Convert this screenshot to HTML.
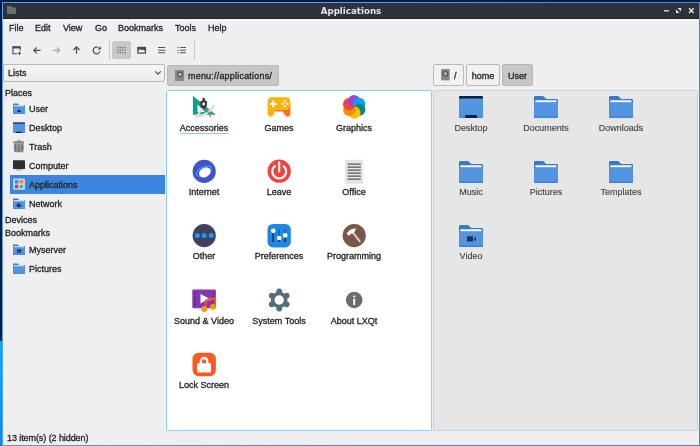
<!DOCTYPE html>
<html><head><meta charset="utf-8"><title>Applications</title>
<style>
*{box-sizing:border-box;margin:0;padding:0}
html,body{width:700px;height:446px;overflow:hidden}
body{position:relative;background:#011d42;font-family:"Liberation Sans",sans-serif;font-size:9px;color:#232323}
.abs,.t,.c,svg{position:absolute}
.t,.c{will-change:transform;-webkit-text-stroke:.3px #222}
.t{line-height:12px;white-space:nowrap}
.c{line-height:12px;white-space:nowrap;text-align:center;width:76px}
#win{left:2px;top:2.2px;width:698px;height:443.8px;background:linear-gradient(135deg,#5a9ff3 30%,#3e86de 70%)}
#inner{left:3px;top:3.3px;width:695.8px;height:441.8px;background:#efefef}
#title{left:3px;top:3.3px;width:695.8px;height:16.1px;background:#2e323d;border-bottom:1px solid #22252e}
#tl{left:3px;top:19.5px;width:695.8px;height:1.3px;background:#fcfcfc}
.r{color:#454545;-webkit-text-stroke:.15px #454545}
.btn{border:1px solid #b9b9b9;border-radius:2px;background:#f1f1f1}
.btn.on{background:#c6c6c6;border-color:#b8b8b8}
.sep{width:1px;background:#c9c9c9}
</style></head><body>
<div class="abs" style="left:0;top:341px;width:3px;height:105px;background:linear-gradient(#04b0fd,#0b88ec)"></div>
<div class="abs" id="win"></div>
<div class="abs" id="inner"></div>
<div class="abs" id="title"></div>
<div class="abs" id="tl"></div>
<!-- title -->
<svg style="left:6.7px;top:6px" width="9.2" height="8.2" viewBox="0 0 9.2 8.2"><path d="M0 0h4l1.3 1.4H9.2V8.2H0z" fill="#6e6e6e"/></svg>
<div class="t" style="left:251px;width:200px;text-align:center;top:5px;font-family:'DejaVu Sans','Liberation Sans',sans-serif;font-size:8.7px;font-weight:bold;color:#e4e4e4;-webkit-text-stroke:0">Applications</div>
<svg style="left:663px;top:6px" width="32" height="10" viewBox="0 0 32 10"><g stroke="#ececec" fill="none"><path d="M1 4.8h5" stroke-width="1.2"/><path d="M26 2.3l4.6 4.6M30.600 2.3l-4.600 4.6" stroke-width="1.35"/></g><path d="M14.600 2.100h3.500v3.500zM13 3.400v3.500h3.500z" fill="#ececec"/></svg>
<!-- menubar -->
<div class="t" style="left:9px;top:22px">File</div>
<div class="t" style="left:35px;top:22px">Edit</div>
<div class="t" style="left:63px;top:22px">View</div>
<div class="t" style="left:95px;top:22px">Go</div>
<div class="t" style="left:118px;top:22px">Bookmarks</div>
<div class="t" style="left:175px;top:22px">Tools</div>
<div class="t" style="left:208px;top:22px">Help</div>
<!-- toolbar -->
<div class="abs sep" style="left:109px;top:40px;height:20px"></div>
<div class="abs sep" style="left:194px;top:40px;height:20px"></div>
<div class="abs" style="left:112.2px;top:40.7px;width:18.8px;height:18.7px;background:#c7c8c7;border-radius:2.5px"></div>
<svg id="tb" style="left:0;top:36px" width="210" height="28" viewBox="0 0 210 28">
<g fill="none" stroke="#4a4a4a" stroke-width="1.2">
<path d="M12.9 11.5V17.7H17.2M20.2 11.5V14.6" stroke-width="1.1"/><path d="M12.3 11.3h8.5" stroke-width="2.3"/>
<path d="M34 14.4h6.5M36.8 11.4l-3 3 3 3"/>
<path d="M73.4 14l3.1-3.1 3.1 3.1M76.5 11v6.8"/>
<path d="M99.87 15.34A3.4 3.4 0 1 1 98.6 11.65" stroke-width="1.15"/>
</g>
<path d="M100.9 10.3V13.6H97.6z" fill="#4a4a4a"/>
<path d="M17.9 17.3h3.2M19.5 15.7v3.2" stroke="#4a4a4a" stroke-width="1.05"/>
<g fill="none" stroke="#a8a8a8" stroke-width="1.2"><path d="M53 14.4h6.5M56.7 11.4l3 3-3 3"/></g>
<g fill="#707070"><rect x="117.3" y="10.95" width="1.3" height="1.3"/><rect x="119.8" y="10.95" width="1.3" height="1.3"/><rect x="122.2" y="10.95" width="1.3" height="1.3"/><rect x="124.7" y="10.95" width="1.3" height="1.3"/><rect x="117.3" y="13.5" width="1.3" height="1.3"/><rect x="119.8" y="13.5" width="1.3" height="1.3"/><rect x="122.2" y="13.5" width="1.3" height="1.3"/><rect x="124.7" y="13.5" width="1.3" height="1.3"/><rect x="117.3" y="16.05" width="1.3" height="1.3"/><rect x="119.8" y="16.05" width="1.3" height="1.3"/><rect x="122.2" y="16.05" width="1.3" height="1.3"/><rect x="124.7" y="16.05" width="1.3" height="1.3"/></g>
<rect x="137.2" y="10.7" width="8.9" height="7.1" rx=".7" fill="#4c4c4c"/><path d="M138.5 16.6V14.7L140.3 13L142 14.5L143.2 13.5L144.9 15.1V16.6z" fill="#f4f4f4"/>
<g stroke="#555" stroke-width="1.1"><path d="M158 11.5h7.3M158 14.2h7.3M158 16.7h7.3"/><path d="M180.1 11.5h5.9M180.1 14.2h5.9M180.1 16.7h5.9M177.5 11.5h1.4M177.5 14.2h1.4M177.5 16.7h1.4"/></g>
</svg>
<!-- combo + paths -->
<div class="abs btn" style="left:3.3px;top:64px;width:161.4px;height:17.6px;background:linear-gradient(#f4f4f4,#ececec)"></div>
<div class="t" style="left:8px;top:67px">Lists</div>
<svg style="left:154px;top:70px" width="8" height="6" viewBox="0 0 8 6"><path d="M1.2 1.3l2.8 2.8 2.8-2.8" fill="none" stroke="#4c4c4c" stroke-width="1.15"/></svg>
<div class="abs btn on" style="left:167px;top:65px;width:111.6px;height:20.8px"></div>
<svg style="left:174.7px;top:70.3px" width="9.5" height="11.2" viewBox="0 0 10 12" preserveAspectRatio="none"><rect width="10" height="12" fill="#888"/><circle cx="5.2" cy="4.8" r="2.6" fill="#b4b4b4" stroke="#555" stroke-width="1.3"/></svg>
<div class="t" style="left:188px;top:70px;letter-spacing:.2px">menu://applications/</div>
<div class="abs btn" style="left:433.2px;top:64.4px;width:31.3px;height:21.6px"></div>
<svg style="left:441.1px;top:69.3px" width="8.8" height="11.4" viewBox="0 0 9 12"><rect width="9" height="12" fill="#888"/><circle cx="4.5" cy="4.9" r="2.5" fill="#b4b4b4" stroke="#555" stroke-width="1.3"/></svg>
<div class="t" style="left:454px;top:70px">/</div>
<div class="abs btn" style="left:466px;top:64.4px;width:34px;height:21.6px"></div>
<div class="t" style="left:466px;width:34px;text-align:center;top:70px">home</div>
<div class="abs btn on" style="left:502.3px;top:64.4px;width:31px;height:21.6px"></div>
<div class="t" style="left:502px;width:31px;text-align:center;top:70px">User</div>
<!-- sidebar -->
<div class="abs" style="left:10px;top:175px;width:155px;height:19px;background:#3b87e0"></div>
<div class="t" style="left:5px;top:87px">Places</div>
<div class="t" style="left:29px;top:103px">User</div>
<div class="t" style="left:29px;top:122px">Desktop</div>
<div class="t" style="left:29px;top:141px">Trash</div>
<div class="t" style="left:29px;top:160px">Computer</div>
<div class="t" style="left:29px;top:179px">Applications</div>
<div class="t" style="left:29px;top:198px">Network</div>
<div class="t" style="left:5px;top:214px">Devices</div>
<div class="t" style="left:5px;top:227px">Bookmarks</div>
<div class="t" style="left:29px;top:244px">Myserver</div>
<div class="t" style="left:29px;top:263px">Pictures</div>
<!-- panes -->
<div class="abs" style="left:166px;top:90px;width:266px;height:341.4px;background:#fff;border:1.2px solid #8ecbef;border-radius:1.5px"></div>
<div class="abs" style="left:432.8px;top:90px;width:265.2px;height:341.4px;background:#e6e6e6;border:1.1px solid #b3d8f0;border-radius:1.5px"></div>
<!-- labels middle -->
<div class="c" style="left:166px;top:122px">Accessories</div>
<div class="abs" style="left:180.2px;top:132.7px;width:48.8px;height:1.1px;background:#9cc6ee"></div>
<div class="c" style="left:241px;top:122px">Games</div>
<div class="c" style="left:316px;top:122px">Graphics</div>
<div class="c" style="left:166px;top:186px">Internet</div>
<div class="c" style="left:241px;top:186px">Leave</div>
<div class="c" style="left:316px;top:186px">Office</div>
<div class="c" style="left:166px;top:250px">Other</div>
<div class="c" style="left:241px;top:250px">Preferences</div>
<div class="c" style="left:316px;top:250px">Programming</div>
<div class="c" style="left:166px;top:315px">Sound &amp; Video</div>
<div class="c" style="left:241px;top:315px">System Tools</div>
<div class="c" style="left:316px;top:315px">About LXQt</div>
<div class="c" style="left:166px;top:379px">Lock Screen</div>
<!-- labels right -->
<div class="c r" style="left:433px;top:122px">Desktop</div>
<div class="c r" style="left:508px;top:122px">Documents</div>
<div class="c r" style="left:583px;top:122px">Downloads</div>
<div class="c r" style="left:433px;top:186px">Music</div>
<div class="c r" style="left:508px;top:186px">Pictures</div>
<div class="c r" style="left:583px;top:186px">Templates</div>
<div class="c r" style="left:433px;top:250px">Video</div>
<!-- status -->
<div class="t" style="left:7px;top:432px;letter-spacing:-.08px">13 item(s) (2 hidden)</div>
<!--ICONS-->
<svg style="left:192px;top:95px" width="24" height="24" viewBox="0 0 24 24"><path d="M.9 .7V19.8H23.8zM5.5 9.6V17.1H13z" fill="#119e8c" fill-rule="evenodd"/><path d="M11 12.6L4 22.6" stroke="#e0e0e0" stroke-width="2.3" fill="none"/><path d="M3.4 21.2Q15.5 21.6 22 10.4" stroke="#dddddd" stroke-width="2.4" fill="none"/><path d="M12.6 12.6L14.4 12.6L19.2 21.8L18.3 22.4z" fill="#858585"/><path d="M10.5 3H12.9V5.3L15.1 6.6V10.4L13.4 13.7H10.1L8.3 10.4V6.6L10.5 5.3z" fill="#3d3d3d"/><circle cx="11.7" cy="9" r="1.45" fill="#fff"/></svg>
<svg style="left:267px;top:95px" width="24" height="24" viewBox="0 0 24 24"><path d="M9 14.5H20.5Q23.4 12 23.4 9V17.6Q23.9 21.6 20.6 21.7Q18.6 21.7 17.4 19.4L15.8 16.4H8z" fill="#ff6f1e"/><path d="M5.2 2.3H18.8Q23.4 2.3 23.4 7V10Q23.4 14.6 18.8 14.8H10.2Q8.6 14.8 8 16.2L6.6 19.4Q5.6 21.7 3.4 21.7Q.4 21.6 .6 17.6V7Q.6 2.3 5.2 2.3z" fill="#ffb20a"/><path d="M6.2 5.6V12.2M2.9 8.9H9.5" stroke="#fff" stroke-width="2"/><circle cx="18" cy="6.5" r="1.15" fill="#fff"/><circle cx="18" cy="11.4" r="1.15" fill="#fff"/><circle cx="15.6" cy="8.95" r="1.15" fill="#fff"/><circle cx="20.4" cy="8.95" r="1.15" fill="#fff"/></svg>
<svg style="left:342px;top:95px" width="24" height="24" viewBox="0 0 24 24"><clipPath id="oc"><circle cx="7.28" cy="14.97" r="6.1"/></clipPath><circle cx="7.08" cy="9.18" r="6.1" fill="#f44336"/><circle cx="12.00" cy="6.10" r="6.1" fill="#9c44cf"/><circle cx="17.12" cy="8.83" r="6.1" fill="#08a5f2"/><circle cx="17.32" cy="14.62" r="6.1" fill="#0c8a78"/><circle cx="12.40" cy="17.70" r="6.1" fill="#fdbf0e"/><circle cx="7.28" cy="14.97" r="6.1" fill="#fb8c00"/><circle cx="7.08" cy="9.18" r="6.1" fill="#f44336" clip-path="url(#oc)"/><circle cx="12.00" cy="6.10" r="6.1" fill="#9c44cf" clip-path="url(#oc)"/></svg>
<svg style="left:192px;top:159px" width="25" height="25" viewBox="0 0 25 25"><circle cx="12.2" cy="12.4" r="11.6" fill="#4253c9"/><ellipse cx="12" cy="12.2" rx="8.2" ry="4.3" transform="rotate(-27 12 12.2)" fill="none" stroke="#2e9bf4" stroke-width="1.5"/><ellipse cx="13.1" cy="13.6" rx="7" ry="5.5" transform="rotate(-27 13.1 13.6)" fill="#4253c9"/><ellipse cx="12.9" cy="13.4" rx="6.2" ry="4.7" transform="rotate(-27 12.9 13.4)" fill="#fff"/></svg>
<svg style="left:267px;top:159px" width="25" height="25" viewBox="0 0 25 25"><circle cx="12.2" cy="12.2" r="11.6" fill="#f0433a"/><path d="M8.4 6.6A7 7 0 1 0 16 6.6" fill="none" stroke="#fff" stroke-width="2.2"/><path d="M12.2 3.2V12.4" stroke="#fff" stroke-width="2.1" stroke-linecap="round"/></svg>
<svg style="left:342px;top:159px" width="24" height="26" viewBox="0 0 24 26"><rect x="3" y=".7" width="18.3" height="24.1" rx=".8" fill="#e4e4e4"/><path d="M5.6 5.1H18.8M5.6 8.1H18.8M5.6 11.1H18.8M5.6 14.1H18.8M5.6 17.1H18.8M5.6 20.1H18.8" stroke="#555" stroke-width="1.4"/></svg>
<svg style="left:192px;top:223px" width="25" height="25" viewBox="0 0 25 25"><circle cx="12.2" cy="12.6" r="11.6" fill="#41415f"/><circle cx="5.3" cy="12.6" r="2.5" fill="#2196f3"/><circle cx="12.2" cy="12.6" r="2.5" fill="#2196f3"/><circle cx="19.2" cy="12.6" r="2.5" fill="#2196f3"/></svg>
<svg style="left:267px;top:223px" width="24" height="25" viewBox="0 0 24 25"><rect x=".5" y="1" width="23.3" height="23.4" rx="5.4" fill="#1e88e5"/><path d="M6.2 6V19M12.2 6V19M18.2 6V19" stroke="#1762b5" stroke-width="1.4"/><path d="M6.2 8V19M12.2 15V19M18.2 12.4V19" stroke="#222c3a" stroke-width="1.5"/><circle cx="6.2" cy="7.8" r="2.35" fill="#fff"/><circle cx="12.2" cy="15" r="2.35" fill="#fff"/><circle cx="18.2" cy="12.4" r="2.35" fill="#fff"/></svg>
<svg style="left:342px;top:223px" width="25" height="25" viewBox="0 0 25 25"><circle cx="12.2" cy="12.6" r="11.6" fill="#7a5548"/><path d="M11 9.6L17.8 18.4" stroke="#dccfca" stroke-width="1.9" stroke-linecap="round"/><path d="M4.6 10.6L6.4 8.4Q9.4 4.9 14.8 5.5Q12.2 6.9 12.8 8.8L10 11.2L9 10.2L7 12.9z" fill="#fff"/></svg>
<svg style="left:192px;top:288px" width="25" height="25" viewBox="0 0 25 25"><rect x=".3" y="1.5" width="23.6" height="18.7" rx="1.2" fill="#8338b2"/><rect x="1.8" y="4.4" width="2" height="1.9" rx=".3" fill="#5b2886"/><rect x="1.8" y="8" width="2" height="1.9" rx=".3" fill="#5b2886"/><rect x="1.8" y="11.7" width="2" height="1.9" rx=".3" fill="#5b2886"/><rect x="1.8" y="15.3" width="2" height="1.9" rx=".3" fill="#5b2886"/><rect x="20.6" y="4.4" width="2" height="1.9" rx=".3" fill="#5b2886"/><rect x="20.6" y="8" width="2" height="1.9" rx=".3" fill="#5b2886"/><rect x="20.6" y="11.7" width="2" height="1.9" rx=".3" fill="#5b2886"/><rect x="20.6" y="15.3" width="2" height="1.9" rx=".3" fill="#5b2886"/><path d="M8.5 6V15.6L16.9 10.6z" fill="#fff"/><path d="M13.7 20V12.3L22.9 9.8V17.8" fill="none" stroke="#ff5722" stroke-width="1.6"/><path d="M13.7 12.3L22.9 9.8V11.4L13.7 13.9z" fill="#ff5722"/><circle cx="12.2" cy="21" r="2.9" fill="#ff9800"/><circle cx="20.9" cy="18.8" r="2.9" fill="#ff9800"/></svg>
<svg style="left:267px;top:288px" width="25" height="25" viewBox="0 0 25 25"><circle cx="12.20" cy="3.40" r="2.9" fill="#546e7a"/><circle cx="19.65" cy="7.70" r="2.9" fill="#546e7a"/><circle cx="19.65" cy="16.30" r="2.9" fill="#546e7a"/><circle cx="12.20" cy="20.60" r="2.9" fill="#546e7a"/><circle cx="4.75" cy="16.30" r="2.9" fill="#546e7a"/><circle cx="4.75" cy="7.70" r="2.9" fill="#546e7a"/><circle cx="12.2" cy="12" r="8.3" fill="#546e7a"/><circle cx="12.2" cy="12" r="4.7" fill="#fff"/></svg>
<svg style="left:342px;top:288px" width="25" height="25" viewBox="0 0 25 25"><circle cx="12.2" cy="12" r="8.3" fill="#6c6c6c"/><circle cx="12.2" cy="8.6" r="1.15" fill="#fff"/><rect x="11.2" y="10.8" width="2" height="6.2" rx=".3" fill="#fff"/></svg>
<svg style="left:192px;top:352px" width="25" height="25" viewBox="0 0 25 25"><rect x=".5" y=".7" width="23.4" height="23.5" rx="6.2" fill="#ff5722"/><path d="M8.9 12V9.2A3.2 3.2 0 0 1 15.3 9.2V12" fill="none" stroke="#fff" stroke-width="2.3"/><rect x="5" y="11.3" width="14" height="9.3" rx="1" fill="#fff"/></svg>
<svg style="left:459px;top:95px" width="24" height="24" viewBox="0 0 24 24"><rect x="0" y="1" width="24" height="21.9" rx="1.2" fill="#5294e2"/><path d="M0 2.2Q0 1 1.2 1H22.8Q24 1 24 2.2V3.8H0z" fill="#0d2342"/><rect x="0" y="3.8" width="24" height=".7" fill="#5fa3f0"/><path d="M6 22.9V21.2Q6 20 7.2 20H16.8Q18 20 18 21.2V22.9z" fill="#0d2342"/><rect x="0" y="22.2" width="6" height=".7" fill="#3d7fd6"/><rect x="18" y="22.2" width="6" height=".7" fill="#3d7fd6"/></svg>
<svg style="left:534px;top:95px" width="24" height="24" viewBox="0 0 24 24"><path d="M0 2.2Q0 1 1.2 1H8.6Q9.4 1 10 1.7L11.6 3.6Q12 4 12.8 4H22.8Q24 4 24 5.2V12H0z" fill="#3b79c6"/><rect x="1.3" y="5.3" width="21.2" height="2.2" rx=".4" fill="#fbfbfb"/><path d="M0 7.6H24V21.6Q24 22.9 22.8 22.9H1.2Q0 22.9 0 21.6z" fill="#5294e2"/><path d="M0 21.4H24V21.7Q24 22.9 22.8 22.9H1.2Q0 22.9 0 21.7z" fill="#4080d8"/></svg>
<svg style="left:609px;top:95px" width="24" height="24" viewBox="0 0 24 24"><path d="M0 2.2Q0 1 1.2 1H8.6Q9.4 1 10 1.7L11.6 3.6Q12 4 12.8 4H22.8Q24 4 24 5.2V12H0z" fill="#3b79c6"/><rect x="1.3" y="5.3" width="21.2" height="2.2" rx=".4" fill="#fbfbfb"/><path d="M0 7.6H24V21.6Q24 22.9 22.8 22.9H1.2Q0 22.9 0 21.6z" fill="#5294e2"/><path d="M0 21.4H24V21.7Q24 22.9 22.8 22.9H1.2Q0 22.9 0 21.7z" fill="#4080d8"/></svg>
<svg style="left:459px;top:159.5px" width="24" height="24" viewBox="0 0 24 24"><path d="M0 2.2Q0 1 1.2 1H8.6Q9.4 1 10 1.7L11.6 3.6Q12 4 12.8 4H22.8Q24 4 24 5.2V12H0z" fill="#3b79c6"/><rect x="1.3" y="5.3" width="21.2" height="2.2" rx=".4" fill="#fbfbfb"/><path d="M0 7.6H24V21.6Q24 22.9 22.8 22.9H1.2Q0 22.9 0 21.6z" fill="#5294e2"/><path d="M0 21.4H24V21.7Q24 22.9 22.8 22.9H1.2Q0 22.9 0 21.7z" fill="#4080d8"/></svg>
<svg style="left:534px;top:159.5px" width="24" height="24" viewBox="0 0 24 24"><path d="M0 2.2Q0 1 1.2 1H8.6Q9.4 1 10 1.7L11.6 3.6Q12 4 12.8 4H22.8Q24 4 24 5.2V12H0z" fill="#3b79c6"/><rect x="1.3" y="5.3" width="21.2" height="2.2" rx=".4" fill="#fbfbfb"/><path d="M0 7.6H24V21.6Q24 22.9 22.8 22.9H1.2Q0 22.9 0 21.6z" fill="#5294e2"/><path d="M0 21.4H24V21.7Q24 22.9 22.8 22.9H1.2Q0 22.9 0 21.7z" fill="#4080d8"/></svg>
<svg style="left:609px;top:159.5px" width="24" height="24" viewBox="0 0 24 24"><path d="M0 2.2Q0 1 1.2 1H8.6Q9.4 1 10 1.7L11.6 3.6Q12 4 12.8 4H22.8Q24 4 24 5.2V12H0z" fill="#3b79c6"/><rect x="1.3" y="5.3" width="21.2" height="2.2" rx=".4" fill="#fbfbfb"/><path d="M0 7.6H24V21.6Q24 22.9 22.8 22.9H1.2Q0 22.9 0 21.6z" fill="#5294e2"/><path d="M0 21.4H24V21.7Q24 22.9 22.8 22.9H1.2Q0 22.9 0 21.7z" fill="#4080d8"/></svg>
<svg style="left:459px;top:224px" width="24" height="24" viewBox="0 0 24 24"><path d="M0 2.2Q0 1 1.2 1H8.6Q9.4 1 10 1.7L11.6 3.6Q12 4 12.8 4H22.8Q24 4 24 5.2V12H0z" fill="#3b79c6"/><rect x="1.3" y="5.3" width="21.2" height="2.2" rx=".4" fill="#fbfbfb"/><path d="M0 7.6H24V21.6Q24 22.9 22.8 22.9H1.2Q0 22.9 0 21.6z" fill="#5294e2"/><path d="M0 21.4H24V21.7Q24 22.9 22.8 22.9H1.2Q0 22.9 0 21.7z" fill="#4080d8"/><rect x="8" y="12.2" width="6.2" height="5.4" rx=".5" fill="#1c3354"/><path d="M14.6 14.9L17 12.8V17z" fill="#1c3354"/></svg>
<svg style="left:12.9px;top:103.1px" width="12" height="11.3" viewBox="0 0 24 24" preserveAspectRatio="none"><path d="M0 2.2Q0 1 1.2 1H8.6Q9.4 1 10 1.7L11.6 3.6Q12 4 12.8 4H22.8Q24 4 24 5.2V12H0z" fill="#3b79c6"/><rect x="1.6" y="4.6" width="20.8" height="3" rx=".4" fill="#fbfbfb"/><path d="M0 7.6H24V21.6Q24 22.9 22.8 22.9H1.2Q0 22.9 0 21.6z" fill="#5294e2"/><path d="M0 21.4H24V21.7Q24 22.9 22.8 22.9H1.2Q0 22.9 0 21.7z" fill="#4080d8"/><path d="M8 18L12 13.2L16 18V19H8z" fill="#14294a"/></svg>
<svg style="left:12.9px;top:121.5px" width="12" height="11.7" viewBox="0 0 24 24" preserveAspectRatio="none"><rect x="0" y="1" width="24" height="21.9" rx="1.2" fill="#5294e2"/><path d="M0 2.2Q0 1 1.2 1H22.8Q24 1 24 2.2V3.8H0z" fill="#0d2342"/><rect x="0" y="3.8" width="24" height=".7" fill="#5fa3f0"/><path d="M6 22.9V21.2Q6 20 7.2 20H16.8Q18 20 18 21.2V22.9z" fill="#0d2342"/><rect x="0" y="22.2" width="6" height=".7" fill="#3d7fd6"/><rect x="18" y="22.2" width="6" height=".7" fill="#3d7fd6"/></svg>
<svg style="left:13px;top:140px" width="12" height="13" viewBox="0 0 12 13"><rect x="4" y=".3" width="3.6" height="1.4" rx=".5" fill="#8a8a8a"/><path d="M.5 1.8Q.5 1.2 1.2 1.2H10.3Q11 1.2 11 1.8V3.6H.5z" fill="#858585"/><path d="M1 3.4H10.6Q11.4 8 10.2 12.3H1.4Q.2 8 1 3.4z" fill="#8c8c8c"/><path d="M2.6 5V11.2M5.8 4.8V11.4M9 5V11.2" stroke="#6f6f6f" stroke-width="1.3"/><path d="M4.2 5V11.3M7.4 5V11.3" stroke="#a9a9a9" stroke-width=".9"/></svg>
<svg style="left:13px;top:160px" width="12" height="12" viewBox="0 0 12 12"><rect x="0" y=".2" width="12" height="8.8" rx=".6" fill="#2e2e2e"/><rect x="2.6" y="9.4" width="6.8" height="1.1" fill="#9a9a9a"/></svg>
<svg style="left:13px;top:178px" width="12" height="12" viewBox="0 0 12 12"><rect x="0" y=".4" width="12" height="11.4" rx="1.2" fill="#c7d2e5"/><rect x="1.9" y="2.1" width="3.4" height="3.4" rx=".3" fill="#1a9bf0"/><rect x="6.7" y="2.1" width="3.4" height="3.4" rx=".3" fill="#e0952e"/><rect x="1.9" y="6.8" width="3.4" height="3.4" rx=".3" fill="#dc374b"/><path d="M8.4 6.5L10.4 9.3H9.1V10.3H7.7V9.3H6.4z" fill="#2e9e6e"/></svg>
<svg style="left:12.9px;top:197.8px" width="12" height="11.3" viewBox="0 0 24 24" preserveAspectRatio="none"><path d="M0 2.2Q0 1 1.2 1H8.6Q9.4 1 10 1.7L11.6 3.6Q12 4 12.8 4H22.8Q24 4 24 5.2V12H0z" fill="#3b79c6"/><rect x="1.6" y="4.6" width="20.8" height="3" rx=".4" fill="#fbfbfb"/><path d="M0 7.6H24V21.6Q24 22.9 22.8 22.9H1.2Q0 22.9 0 21.6z" fill="#5294e2"/><path d="M0 21.4H24V21.7Q24 22.9 22.8 22.9H1.2Q0 22.9 0 21.7z" fill="#4080d8"/><circle cx="12" cy="15.4" r="4.4" fill="#14294a"/><path d="M12 12.4A3 3 0 0 1 15 15.4H12z" fill="#5294e2"/></svg>
<svg style="left:12.9px;top:244px" width="12" height="11.3" viewBox="0 0 24 24" preserveAspectRatio="none"><path d="M0 2.2Q0 1 1.2 1H8.6Q9.4 1 10 1.7L11.6 3.6Q12 4 12.8 4H22.8Q24 4 24 5.2V12H0z" fill="#3b79c6"/><rect x="1.6" y="4.6" width="20.8" height="3" rx=".4" fill="#fbfbfb"/><path d="M0 7.6H24V21.6Q24 22.9 22.8 22.9H1.2Q0 22.9 0 21.6z" fill="#5294e2"/><path d="M0 21.4H24V21.7Q24 22.9 22.8 22.9H1.2Q0 22.9 0 21.7z" fill="#4080d8"/><rect x="8" y="11.6" width="8" height="7" rx=".6" fill="#14294a"/><rect x="9.6" y="15" width="4.8" height="1.8" fill="#5294e2"/></svg>
<svg style="left:12.9px;top:262.8px" width="12" height="11.3" viewBox="0 0 24 24" preserveAspectRatio="none"><path d="M0 2.2Q0 1 1.2 1H8.6Q9.4 1 10 1.7L11.6 3.6Q12 4 12.8 4H22.8Q24 4 24 5.2V12H0z" fill="#3b79c6"/><rect x="1.6" y="4.6" width="20.8" height="3" rx=".4" fill="#fbfbfb"/><path d="M0 7.6H24V21.6Q24 22.9 22.8 22.9H1.2Q0 22.9 0 21.6z" fill="#5294e2"/><path d="M0 21.4H24V21.7Q24 22.9 22.8 22.9H1.2Q0 22.9 0 21.7z" fill="#4080d8"/></svg>
</body></html>
